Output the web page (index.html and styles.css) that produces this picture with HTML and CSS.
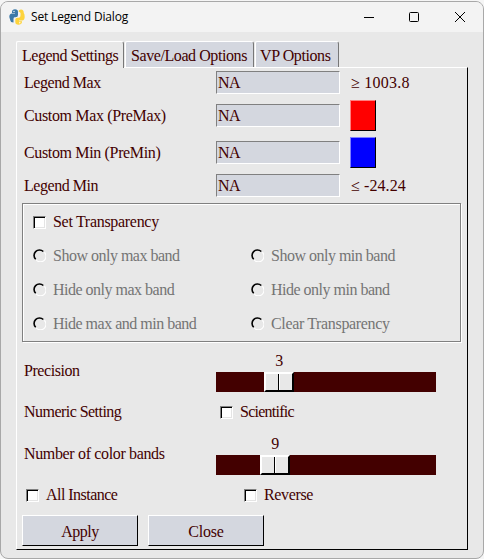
FILE: index.html
```html
<!DOCTYPE html>
<html lang="en">
<head>
<meta charset="utf-8">
<title>Set Legend Dialog</title>
<link rel="stylesheet" href="styles.css">
</head>
<body>
<div class="window">
  <header class="titlebar">
    <svg class="logo" width="16" height="16" viewBox="0 0 16 16">
      <path fill="#3b78a8" d="M3 3Q3 .3 6 .3Q9 .3 9 3V6Q9 8.300 6.500 8.300H5.500Q4.500 8.300 4.500 10V13.500Q1.500 13.500 1.200 11L.3 8Q.3 4.800 3 4.600H6V4H3Z"/>
      <path fill="#fdd33c" d="M9.600 2.500Q9.600 .6 12 .6Q14.800 .8 14.800 4Q15.700 5 15.700 8Q15.700 11 13 11.600H10V12.200H13V13Q12.500 15.700 9.500 15.700Q6.300 15.700 6.300 13V10.500Q6.300 8.800 8.500 8.800H10Q11.500 8.500 11.500 6.500V4Q11 3 9.600 2.500Z"/>
      <circle cx="5" cy="2.500" r=".7" fill="#fff"/><circle cx="10.800" cy="13.700" r=".7" fill="#fff"/>
    </svg>
    <span class="title">Set Legend Dialog</span>
    <svg class="controls" width="104" height="14" viewBox="0 0 104 14" fill="none" stroke="#000">
      <path d="M1 7.500H11"/>
      <rect x="46.500" y="2.500" width="9" height="9" rx="1"/>
      <path d="M92 2L102 12M102 2L92 12"/>
    </svg>
  </header>
  <nav class="tabs">
    <div class="tab active">Legend Settings</div>
    <div class="tab save">Save/Load Options</div>
    <div class="tab vp">VP Options</div>
  </nav>
  <main class="panel">
    <div class="row field-row"><label class="snug">Legend Max</label><div class="field">NA</div><span class="limit wide">≥ 1003.8</span></div>
    <div class="row swatch-row"><label>Custom Max (PreMax)</label><div class="field">NA</div><div class="swatch red"></div></div>
    <div class="row swatch-row"><label>Custom Min (PreMin)</label><div class="field">NA</div><div class="swatch blue"></div></div>
    <div class="row field-row"><label class="snug">Legend Min</label><div class="field">NA</div><span class="limit">≤ -24.24</span></div>
    <section class="group">
      <div class="option set"><i class="check"></i><span>Set Transparency</span></div>
      <div class="option"><svg class="radio" viewBox="0 0 12 12"><path class="lit" d="M10.500 3A5.200 5.200 0 1 1 3 10.300"/><path class="shade" d="M2.500 9.500A5 5 0 1 1 9.500 2.300"/></svg><span>Show only max band</span></div>
      <div class="option"><svg class="radio" viewBox="0 0 12 12"><path class="lit" d="M10.500 3A5.200 5.200 0 1 1 3 10.300"/><path class="shade" d="M2.500 9.500A5 5 0 1 1 9.500 2.300"/></svg><span>Show only min band</span></div>
      <div class="option"><svg class="radio" viewBox="0 0 12 12"><path class="lit" d="M10.500 3A5.200 5.200 0 1 1 3 10.300"/><path class="shade" d="M2.500 9.500A5 5 0 1 1 9.500 2.300"/></svg><span>Hide only max band</span></div>
      <div class="option"><svg class="radio" viewBox="0 0 12 12"><path class="lit" d="M10.500 3A5.200 5.200 0 1 1 3 10.300"/><path class="shade" d="M2.500 9.500A5 5 0 1 1 9.500 2.300"/></svg><span>Hide only min band</span></div>
      <div class="option"><svg class="radio" viewBox="0 0 12 12"><path class="lit" d="M10.500 3A5.200 5.200 0 1 1 3 10.300"/><path class="shade" d="M2.500 9.500A5 5 0 1 1 9.500 2.300"/></svg><span>Hide max and min band</span></div>
      <div class="option clear"><svg class="radio" viewBox="0 0 12 12"><path class="lit" d="M10.500 3A5.200 5.200 0 1 1 3 10.300"/><path class="shade" d="M2.500 9.500A5 5 0 1 1 9.500 2.300"/></svg><span>Clear Transparency</span></div>
    </section>
    <div class="row slider-row">
      <label class="snug">Precision</label>
      <div class="slider precision"><div class="value">3</div><div class="track"><div class="thumb"></div></div></div>
    </div>
    <div class="row check-row"><label class="tight">Numeric Setting</label><div class="toggle tighter"><i class="check"></i><span>Scientific</span></div></div>
    <div class="row slider-row">
      <label>Number of color bands</label>
      <div class="slider bands"><div class="value">9</div><div class="track"><div class="thumb"></div></div></div>
    </div>
    <div class="row pair-row">
      <div class="toggle tight"><i class="check"></i><span>All Instance</span></div>
      <div class="toggle"><i class="check"></i><span>Reverse</span></div>
    </div>
    <div class="buttons"><div class="button apply">Apply</div><div class="button">Close</div></div>
  </main>
</div>
</body>
</html>
```
FILE: styles.css
```css
* { box-sizing: border-box; }
body {
  margin: 0;
  padding-top: 1px;
  background: #f5f5f5;
  font: 16px/20px "Liberation Serif", serif;
  letter-spacing: -0.35px;
  color: #430000;
}
.window {
  width: 484px;
  height: 558px;
  border: 1px solid #a8a8a8;
  border-radius: 8px;
  background: #e8e8e8;
  overflow: hidden;
}
.titlebar {
  height: 30px;
  background: #f3f3f3;
  display: flex;
  align-items: center;
  padding: 0 16px 0 8px;
}
.title {
  margin-left: 6px;
  font: 12px/16px "Open Sans", sans-serif;
  letter-spacing: -0.17px;
  color: #000;
}
.controls { margin-left: auto; }
.snug { letter-spacing: -0.45px; }
.tight { letter-spacing: -0.54px; }
.tighter { letter-spacing: -0.75px; }
.tabs {
  display: flex;
  margin: 9px 0 0 15px;
  height: 26px;
}
.tab {
  border: 1px solid #fff;
  border-right: 1px solid #777;
  border-bottom: 0;
  border-radius: 2px 3px 0 0;
  background: #d4d7df;
  padding-left: 5px;
  line-height: 27px;
  white-space: nowrap;
}
.tab.active {
  width: 108px;
  height: 27px;
  background: #e8e8e8;
  letter-spacing: -0.48px;
  z-index: 1;
}
.tab.save { width: 129px; margin-left: 1px; letter-spacing: -0.42px; }
.tab.vp { width: 84px; margin-left: 1px; letter-spacing: -0.4px; padding-left: 4px; }
.panel {
  width: 452px;
  height: 483px;
  margin-left: 15px;
  border: solid;
  border-width: 1px;
  border-color: #fff #000 #000 #fff;
  padding: 3px 5px;
  display: flex;
  flex-direction: column;
  gap: 6px;
}
.row {
  display: grid;
  grid-template-columns: 192px 134px 1fr;
  align-items: center;
  padding-left: 2px;
  flex: none;
}
.field-row { height: 23px; }
.swatch-row { height: 31px; }
.field {
  width: 124px;
  height: 23px;
  border: 1px solid;
  border-color: #808080 #fff #fff #808080;
  background: #d4d7df;
  padding-left: 1px;
  line-height: 21px;
  letter-spacing: -0.5px;
}
.limit { padding-left: 1px; letter-spacing: 0.1px; }
.limit.wide { letter-spacing: 0.25px; }
.swatch {
  width: 26px;
  height: 31px;
  border: 1px solid #000;
}
.red { background: #f00; border-top-color: #ff8080; border-left-color: #ff8080; }
.blue { background: #00f; border-top-color: #8080ff; border-left-color: #8080ff; }
.group {
  flex: none;
  width: 439px;
  height: 139px;
  margin-bottom: 1px;
  border: 1px solid #808080;
  box-shadow: inset 1px 1px #fff, 1px 1px #fff;
  padding: 1px 0 0 10px;
  display: grid;
  grid-template-columns: 218px 1fr;
  grid-template-rows: repeat(4, 34px);
}
.option, .toggle { display: flex; align-items: center; gap: 7px; }
.option { color: #747474; letter-spacing: -0.5px; }
.option.clear { letter-spacing: -0.35px; }
.option.set { grid-column: span 2; color: #430000; letter-spacing: -0.3px; }
.check {
  width: 13px;
  height: 13px;
  border: 1px solid;
  border-color: #808080 #fff #fff #808080;
  box-shadow: inset 1px 1px #000, inset -1px -1px #e4e4e4;
  background: #fff;
}
.radio { width: 13px; height: 13px; fill: none; margin-bottom: 1px; }
.lit { stroke: #fff; }
.shade { stroke: #000; stroke-width: 1.5; }
.slider-row { height: 43px; grid-template-columns: 192px 220px; }
.slider { width: 220px; height: 43px; }
.value { width: 30px; height: 23px; line-height: 24px; text-align: center; }
.track { height: 20px; background: #430000; }
.thumb {
  width: 30px;
  height: 20px;
  border: 2px solid;
  border-color: #fff #000 #000 #fff;
  background: linear-gradient(90deg, #e8e8e8 12px, #000 12px 13px, #fff 13px 14px, #e8e8e8 14px);
}
.precision .value, .precision .thumb { margin-left: 48px; }
.bands .value, .bands .thumb { margin-left: 44px; }
.check-row { height: 28px; grid-template-columns: 196px 1fr; }
.pair-row { height: 28px; grid-template-columns: 218px 1fr; padding-left: 4px; }
.buttons { display: flex; gap: 10px; }
.button {
  width: 116px;
  height: 31px;
  border: 1px solid;
  border-color: #fff #000 #000 #fff;
  background: #d4d7df;
  text-align: center;
  line-height: 31px;
  letter-spacing: -0.2px;
}
.button.apply { letter-spacing: -0.5px; }
```
